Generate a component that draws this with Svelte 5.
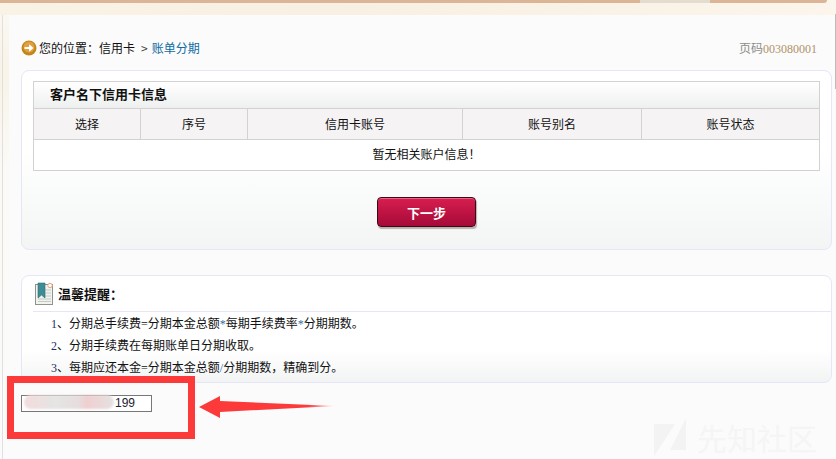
<script>
  const columns = [
    { label: '选择', width: 107 },
    { label: '序号', width: 107 },
    { label: '信用卡账号', width: 215 },
    { label: '账号别名', width: 179 },
    { label: '账号状态', width: 179 }
  ];
  const tips = [
    ['1', '、分期总手续费=分期本金总额', '*', '每期手续费率', '*', '分期期数。'],
    ['2', '、分期手续费在每期账单日分期收取。'],
    ['3', '、每期应还本金=分期本金总额', '/', '分期期数\uFF0C精确到分。']
  ];
</script>

<div class="page">
  <div class="topbar"><div class="topline"></div></div>
  <div class="body-row">
    <div class="side"></div>
    <div class="main">
      <div class="crumbs">
        <div class="path">
          <svg width="16" height="16" viewBox="0 0 16 16">
            <circle cx="8" cy="8" r="7.5" fill="#c4851a" />
            <circle cx="8" cy="7" r="5.5" fill="#dfa040" />
            <path d="M3.5 6.9h4.6V4.2L12.600 8l-4.500 3.800V9.100H3.500z" fill="#fff" />
          </svg>
          <span>您的位置&#xFF1A;信用卡</span>
          <span class="sep">&gt;</span>
          <span class="current">账单分期</span>
        </div>
        <div class="pagecode">页码<span>003080001</span></div>
      </div>

      <section class="panel first">
        <div class="info">
          <div class="info-title">客户名下信用卡信息</div>
          <div class="info-head">
            {#each columns as col}
              <div class="cell" style="width: {col.width}px">{col.label}</div>
            {/each}
          </div>
          <div class="info-empty">暂无相关账户信息&#xFF01;</div>
        </div>
        <div class="actions">
          <button type="button" class="next">下一步</button>
        </div>
      </section>

      <section class="panel second">
        <div class="tip-title">
          <svg width="24" height="24" viewBox="0 0 24 24">
            <rect x="2.5" y="2.500" width="17" height="20" fill="#f1f3ee" stroke="#8d948c" />
            <path d="M11 8h7M11 11h7M11 14h7M5 17h13M5 19.500h13" stroke="#c4c9c6" />
            <path d="M5 1h7v15l-3.500-3L5 16z" fill="#3f8c95" stroke="#2f6f78" stroke-width=".6" />
            <circle cx="17" cy="3.500" r="2.200" fill="#fff" stroke="#eea27f" />
          </svg>
          <strong>温馨提醒&#xFF1A;</strong>
        </div>
        <ul>
          {#each tips as tip}
            <li>
              {#each tip as part, i}
                <span class:num={i === 0} class:sym={part === '*' || part === '/'}>{part}</span>
              {/each}
            </li>
          {/each}
        </ul>
      </section>

      <div class="account">
        <div class="account-box"><i class="blur"></i><span>199</span></div>
      </div>
    </div>
  </div>

  <div class="edge"></div>
  <div class="mark-box"></div>
  <svg class="mark-arrow" width="140" height="30" viewBox="0 0 140 30">
    <defs>
      <linearGradient id="fade" x1="0" x2="1" y1="0" y2="0">
        <stop offset="0" stop-color="#fc3a3a" />
        <stop offset=".8" stop-color="#fc3a3a" />
        <stop offset="1" stop-color="#fc3a3a" stop-opacity=".1" />
      </linearGradient>
    </defs>
    <path d="M0 16 21 5v5l115 5-115 6v6z" fill="url(#fade)" />
  </svg>

  <div class="watermark">
    <svg width="33" height="38" viewBox="0 0 33 38">
      <path d="M0 6h21L0 38zM32 0v32H16z" fill="#f3f3f3" />
    </svg>
    <span>先知社区</span>
  </div>
</div>

<style>
  :global(body) {
    margin: 0;
    background: #fbfbfb;
    font-family: "Noto Sans CJK SC", "Liberation Sans", sans-serif;
  }
  .page {
    position: relative;
    width: 836px;
    height: 459px;
    overflow: hidden;
    font-size: 12px;
    color: #111;
  }
  .topbar {
    height: 15px;
    background: linear-gradient(90deg, #f9f3e6, #f8f0e2 40%, #f9f2e6 70%, #fbf5ec);
  }
  .topline {
    width: 827px;
    height: 3px;
    border-radius: 0 0 3px 0;
    background: linear-gradient(90deg, #dcb597 640px, #e4dccf 640px, #e4dccf 710px, #dcb597 710px);
  }
  .body-row {
    display: flex;
    height: 444px;
  }
  .side {
    width: 9px;
    flex: none;
    background:
      linear-gradient(90deg, transparent 2px, #e2e0dc 2px, #e2e0dc 3px, transparent 3px),
      linear-gradient(#fbf8f2, #f9f3e8 12%, #fbfaf6 35%, #fbfbfb);
  }
  .main {
    flex: 1;
    padding: 0 4px 0 12px;
    min-width: 0;
    background: #fbfbfb;
  }
  .crumbs {
    display: flex;
    align-items: center;
    justify-content: space-between;
    height: 55px;
    padding: 11px 15px 0 0;
    box-sizing: border-box;
  }
  .path {
    display: flex;
    align-items: center;
    gap: 2px;
    line-height: 16px;
  }
  .sep { margin: 0 2px 0 4px; color: #444; }
  .current { color: #0f6ba3; }
  .pagecode { color: #8b8b8b; }
  .pagecode span {
    color: #b09268;
    font-family: "Liberation Serif", serif;
  }

  .panel {
    box-sizing: border-box;
    width: 811px;
    border: 1px solid #e6e6f8;
    border-radius: 8px;
    background: linear-gradient(#fff 45%, #f3f5f5);
  }
  .panel.first {
    height: 180px;
    padding: 10px 11px;
  }
  .panel.second {
    height: 108px;
    margin-top: 25px;
    padding: 0 0 0 11px;
    background: linear-gradient(#fff 70%, #f2f4f3);
  }
  .info {
    width: 787px;
    border: 1px solid #d2d2d2;
    box-sizing: border-box;
    background: #fff;
  }
  .info-title {
    height: 26px;
    line-height: 24px;
    padding-left: 16px;
    font-weight: 700;
    font-size: 13px;
    background: linear-gradient(#fff, #eef0ef);
    border-bottom: 1px solid #d2d2d2;
  }
  .info-head {
    display: flex;
    height: 30px;
    background: #f5f3f4;
    border-bottom: 1px solid #d2d2d2;
  }
  .cell {
    box-sizing: border-box;
    line-height: 30px;
    text-align: center;
    border-right: 1px solid #d2d2d2;
  }
  .cell:last-child { border-right: 0; flex: 1; }
  .info-empty {
    height: 30px;
    line-height: 28px;
    text-align: center;
  }
  .actions {
    display: flex;
    justify-content: center;
    padding-top: 26px;
  }
  .next {
    width: 99px;
    height: 30px;
    padding: 0;
    border: 1px solid #3c0a14;
    border-radius: 4px;
    background: linear-gradient(#d81e50, #a50a38);
    box-shadow: 1px 2px 1px #b9b0ac, inset 0 1px 0 #e8637f;
    color: #fff;
    font: 700 13px "Noto Sans CJK SC", sans-serif;
  }
  .tip-title {
    display: flex;
    align-items: center;
    height: 36px;
    border-bottom: 1px solid #e6e6f8;
    box-sizing: border-box;
  }
  .tip-title strong { font-size: 13px; margin-left: 1px; }
  ul {
    list-style: none;
    margin: 0;
    padding: 1px 0 0 18px;
    font-family: "Liberation Serif", "Noto Sans CJK SC", serif;
  }
  li {
    display: flex;
    height: 22px;
    line-height: 22px;
  }
  .num { color: #1b2f6b; }
  .sym { color: #2f6f9f; }

  .account { padding-top: 12px; }
  .account-box {
    position: relative;
    box-sizing: border-box;
    width: 131px;
    height: 17px;
    border: 1px solid #777;
    background: #fff;
    line-height: 15px;
    padding-left: 93px;
    font-family: "Liberation Sans", sans-serif;
    font-size: 12px;
    color: #223;
  }
  .blur {
    position: absolute;
    left: 2px;
    top: -1px;
    width: 90px;
    height: 14px;
    border-radius: 7px;
    background: linear-gradient(90deg, #f3dcdc, #e6e4e4 35%, #e6dede 60%, #f0cfd0 70%, #e4e2e2);
    filter: blur(1px);
  }

  .edge {
    position: absolute;
    right: 0;
    top: 14px;
    width: 1px;
    height: 75px;
    background: #bcbcbc;
  }
  .mark-box {
    position: absolute;
    left: 7px;
    top: 376px;
    width: 188px;
    height: 63px;
    box-sizing: border-box;
    border: 7px solid #fc3a3a;
  }
  .mark-arrow {
    position: absolute;
    left: 199px;
    top: 391px;
  }
  .watermark {
    position: absolute;
    left: 654px;
    top: 418px;
    display: flex;
    align-items: center;
    gap: 10px;
    color: #f5f5f5;
    font-size: 30px;
    line-height: 36px;
    white-space: nowrap;
  }
</style>
